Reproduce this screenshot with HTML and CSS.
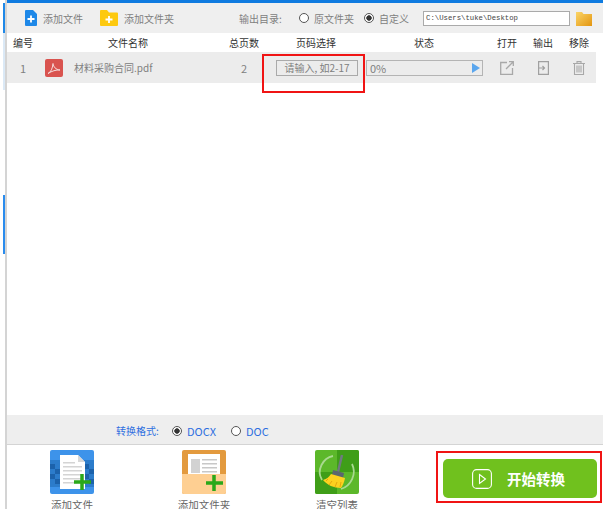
FILE: index.html
```html
<!DOCTYPE html>
<html lang="zh-CN">
<head>
    <meta charset="UTF-8">
    <meta name="viewport" content="width=device-width, initial-scale=1.0">
    <title>PDF转换</title>
    <link rel="stylesheet" href="styles.css">
</head>
<body>
    <div class="app">
        <div class="top-line"></div>

        <div class="toolbar">
            <div class="tool tool-file">
                <svg width="12" height="16" viewBox="0 0 12 16"><path d="M0 1a1 1 0 0 1 1-1h7l4 4v11a1 1 0 0 1-1 1H1a1 1 0 0 1-1-1z" fill="#1e88e8"/><path d="M6 5.500v7M2.500 9h7" stroke="#fff" stroke-width="1.800"/></svg>
                <span>添加文件</span>
            </div>
            <div class="tool tool-folder">
                <svg width="18" height="16" viewBox="0 0 18 16"><path d="M0 1a1 1 0 0 1 1-1h6l2 2.500h8a1 1 0 0 1 1 1V15a1 1 0 0 1-1 1H1a1 1 0 0 1-1-1z" fill="#fdc90f"/><path d="M9 6v7M5.500 9.500h7" stroke="#fff" stroke-width="1.800"/></svg>
                <span>添加文件夹</span>
            </div>
            <span class="out-label">输出目录:</span>
            <span class="radio"></span>
            <span class="out-text">原文件夹</span>
            <span class="radio radio-on"></span>
            <span class="out-text">自定义</span>
            <div class="path-box">C:\Users\tuke\Desktop</div>
            <svg class="path-folder" width="16" height="15" viewBox="0 0 16 15">
                <defs><linearGradient id="pathFolderFill" x1="0" y1="0" x2="1" y2="1"><stop offset="0" stop-color="#fbd568"/><stop offset="1" stop-color="#e3950f"/></linearGradient></defs>
                <path d="M0 1h6l1.500 2H16v12H0z" fill="url(#pathFolderFill)"/>
            </svg>
        </div>

        <div class="list-grid list-head">
            <span>编号</span>
            <span>文件名称</span>
            <span>总页数</span>
            <span>页码选择</span>
            <span>状态</span>
            <span>打开</span>
            <span>输出</span>
            <span class="last-col">移除</span>
        </div>

        <div class="list-body">
            <div class="list-grid list-row">
                <span>1</span>
                <div class="file-cell">
                    <svg width="18" height="18" viewBox="0 0 18 18"><rect width="18" height="18" rx="2" fill="#d9534f"/><path d="M3 14.500c3-1.500 4.500-5 5-10 .6 3.500 2.500 6 7 6.500-4-.3-8 1-12 3.500z" fill="none" stroke="#f6dcdb" stroke-width="1"/></svg>
                    <span class="file-name">材料采购合同.pdf</span>
                </div>
                <span>2</span>
                <div class="page-input">请输入, 如2-17</div>
                <div class="progress">
                    <span>0%</span>
                    <svg width="8" height="10" viewBox="0 0 8 10"><path d="M0 0l8 5-8 5z" fill="#5aa6ee"/></svg>
                </div>
                <svg width="14" height="14" viewBox="0 0 14 14" fill="none" stroke="#a8a8a8" stroke-width="1.300"><path d="M7 1.500H.7v11.800h11.800V7M6 8l7-7M9 .7h4.300V5"/></svg>
                <svg width="11" height="14" viewBox="0 0 11 14" fill="none" stroke="#a0a0a0" stroke-width="1.200"><path d="M.6.6h9.800v12.800H.6zM.6 7h6M4.500 5l2 2-2 2"/></svg>
                <svg class="last-col" width="12" height="14" viewBox="0 0 12 14" fill="none" stroke="#a8a8a8" stroke-width="1.100"><path d="M0 2.500h12M4 2.500V.6h4v1.900M1.500 2.500v11h9v-11M4 4.500v7M6 4.500v7M8 4.500v7"/></svg>
            </div>
        </div>

        <div class="format-bar">
            <span>转换格式:</span>
            <span class="radio radio-on"></span>
            <span class="format-name">DOCX</span>
            <span class="radio radio-second"></span>
            <span class="format-name">DOC</span>
        </div>

        <div class="bottom-bar">
            <div class="big-tool">
                <svg width="44" height="44" viewBox="0 0 44 44">
                    <rect width="44" height="44" rx="2" fill="#3d93ea"/>
                    <path d="M0 10h44v27H0z" fill="#2c7ccb"/>
                    <path d="M0 14h5v5H0zM5 19h5v5H5zM0 24h5v5H0zM5 29h5v5H5zM34 14h5v5h-5zM39 19h5v5h-5zM34 24h5v5h-5zM39 29h5v5h-5z" fill="#1c62ab"/>
                    <path d="M10 5h18l7 7v27H10z" fill="#fff"/>
                    <path d="M28 5l7 7h-7z" fill="#d8d8d8"/>
                    <path d="M13 12h12v1.500H13zM13 16h19v1.500H13zM13 20h19v1.500H13zM13 24h19v1.500H13zM13 28h19v1.500H13zM13 32h14v1.500H13z" fill="#d4d4d4"/>
                    <path d="M32 24v16M24 32h17" stroke="#2aa81a" stroke-width="3.500"/>
                </svg>
                <span>添加文件</span>
            </div>
            <div class="big-tool">
                <svg width="44" height="44" viewBox="0 0 44 44">
                    <rect width="44" height="44" rx="2" fill="#e39a3e"/>
                    <path d="M6 4h32v24H6z" fill="#fff"/>
                    <path d="M9 9h9v14H9z" fill="#d2d2d2"/>
                    <path d="M20 9h15v1.500H20zM20 13h15v1.500H20zM20 17h15v1.500H20zM20 21h15v1.500H20z" fill="#c8c8c8"/>
                    <path d="M0 24h44v18a2 2 0 0 1-2 2H2a2 2 0 0 1-2-2z" fill="#fecf92"/>
                    <path d="M32 25v16M24 33h17" stroke="#2aa81a" stroke-width="3.500"/>
                </svg>
                <span>添加文件夹</span>
            </div>
            <div class="big-tool">
                <svg width="44" height="44" viewBox="0 0 44 44">
                    <rect width="44" height="44" rx="2" fill="#5cb82a"/>
                    <path d="M22 0h20a2 2 0 0 1 2 2v20H22zM0 22h22v22H2a2 2 0 0 1-2-2z" fill="#3f9e18"/>
                    <path d="M7 30C1 20 8 8 18 6M37 14c5 10-1 22-11 25" fill="none" stroke="#a9d990" stroke-width="1.800"/>
                    <path d="M27 5l-4 17" stroke="#6f7a80" stroke-width="2.500"/>
                    <path d="M18 20l11 3-1 5-11-3z" fill="#5b676e"/>
                    <path d="M16 24l14 4c-1 5-2 7-4 10-7 0-14-3-18-8 4-1 6-3 8-6z" fill="#fdd11f"/>
                    <path d="M13 29l-2 2M17 31l-3 4M22 32l-2 5M26 32l-1 5" stroke="#e5a70e" stroke-width="1"/>
                </svg>
                <span>清空列表</span>
            </div>
            <div class="start-btn">
                <svg width="20" height="20" viewBox="0 0 20 20" fill="none" stroke="#fff" stroke-width="1.100"><rect x=".6" y=".6" width="18.800" height="18.800" rx="4"/><path d="M7.500 5.500l6 4.500-6 4.500z"/></svg>
                <span>开始转换</span>
            </div>
        </div>
    </div>

    <div class="side-mark side-top"></div>
    <div class="side-mark side-pale"></div>
    <div class="side-mark side-blue"></div>
    <div class="red-box red-page"></div>
    <div class="red-box red-start"></div>
</body>
</html>
```

FILE: styles.css
```css
html, body {
    margin: 0;
    padding: 0;
}

body {
    position: relative;
    width: 611px;
    height: 509px;
    overflow: hidden;
    background: #fff;
    font-family: "Noto Sans CJK SC", "Noto Sans", sans-serif;
    font-size: 10px;
    color: #808080;
}

.app {
    display: flex;
    flex-direction: column;
    width: 596px;
    height: 509px;
    margin-left: 5px;
    border-left: 2px solid #d4d4d4;
    overflow: hidden;
}

.top-line {
    height: 3px;
    background: #0f7be0;
    flex: none;
}

.toolbar {
    display: flex;
    align-items: center;
    flex: none;
    height: 30px;
    padding-left: 18px;
    background: #efefef;
}

.tool {
    display: flex;
    align-items: center;
    gap: 6px;
}

.tool-file {
    width: 75px;
}

.tool-folder {
    width: 139px;
}

.out-label {
    width: 60px;
}

.radio {
    display: inline-block;
    box-sizing: border-box;
    flex: none;
    width: 10px;
    height: 10px;
    margin-right: 5px;
    border: 1px solid #555;
    border-radius: 50%;
    background: #fff;
}

.radio-on {
    background: radial-gradient(circle, #333 0, #333 2.400px, #fff 3px);
}

.out-text {
    margin-right: 10px;
}

.path-box {
    box-sizing: border-box;
    width: 147px;
    height: 15px;
    margin-left: 4px;
    padding-left: 2px;
    border: 1px solid #aaa;
    background: #fff;
    font-family: "Liberation Mono", monospace;
    font-size: 7.300px;
    line-height: 12px;
    color: #444;
}

.path-folder {
    margin-left: 6px;
}

.list-grid {
    display: grid;
    grid-template-columns: 32px 178px 54px 90px 126px 40px 32px 37px;
    align-items: center;
    justify-items: center;
    width: 589px;
}

.last-col {
    margin-left: 3px;
}

.list-head {
    flex: none;
    height: 18px;
    color: #333;
}

.list-body {
    flex: 1;
    padding-top: 1px;
}

.list-row {
    height: 31px;
    background: #ececec;
}

.file-cell {
    display: flex;
    align-items: center;
    gap: 11px;
    justify-self: start;
    padding-left: 6px;
}

.list-row > span {
    font-size: 11px;
}

.file-name {
    font-size: 10px;
}

.page-input {
    box-sizing: border-box;
    width: 82px;
    height: 16px;
    margin-left: 2px;
    border: 1px solid #aaa;
    line-height: 13px;
    text-align: center;
}

.progress {
    display: flex;
    align-items: center;
    justify-content: space-between;
    box-sizing: border-box;
    width: 117px;
    height: 16px;
    margin-left: 1px;
    padding: 0 2px 0 3px;
    border: 1px solid #b4b4b4;
    font-size: 11px;
}

.format-bar {
    display: flex;
    align-items: center;
    box-sizing: border-box;
    flex: none;
    height: 30px;
    padding: 2px 0 0 109px;
    border-bottom: 1px solid #d4d4d4;
    background: #eee;
    color: #2f6fe0;
}

.format-bar > span:first-child {
    width: 56px;
}

.format-name {
    font-size: 11px;
}

.radio-second {
    margin-left: 15px;
}

.bottom-bar {
    display: grid;
    grid-template-columns: 130px 134px 132px 1fr;
    flex: none;
    height: 64px;
    padding-top: 5px;
    box-sizing: border-box;
}

.big-tool {
    display: flex;
    flex-direction: column;
    align-items: center;
    gap: 3px;
    font-size: 10.500px;
    line-height: 15px;
    color: #666;
}

.start-btn {
    display: flex;
    align-items: center;
    gap: 15px;
    box-sizing: border-box;
    width: 154px;
    height: 39px;
    margin: 9px 0 0 40px;
    padding-left: 29px;
    border-radius: 5px;
    background: #70c11e;
    font-size: 14.500px;
    font-weight: 700;
    color: #fff;
}

/* marks that sit over the left edge and the button */
.side-mark {
    position: absolute;
    left: 3px;
    width: 2px;
}

.side-top {
    top: 3px;
    height: 30px;
    background: #1e88e8;
}

.side-pale {
    top: 33px;
    height: 57px;
    background: #dbe9f6;
}

.side-blue {
    top: 195px;
    height: 59px;
    background: #2a8cee;
}

.red-box {
    position: absolute;
    box-sizing: border-box;
    border: 2px solid #f01414;
}

.red-page {
    left: 262px;
    top: 54px;
    width: 103px;
    height: 39px;
}

.red-start {
    left: 436px;
    top: 451px;
    width: 166px;
    height: 52px;
}
```
